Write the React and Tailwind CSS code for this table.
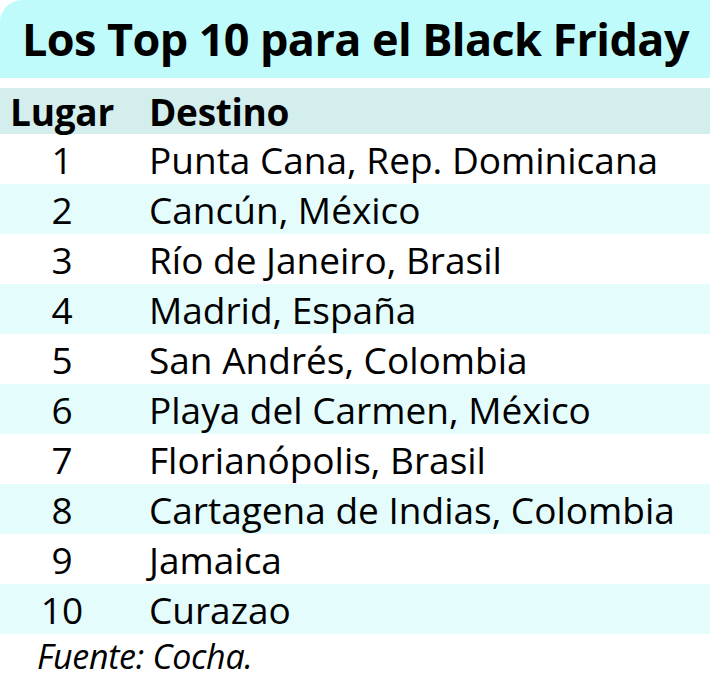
import React from "react";

const rows = [
  "Punta Cana, Rep. Dominicana",
  "Cancún, México",
  "Río de Janeiro, Brasil",
  "Madrid, España",
  "San Andrés, Colombia",
  "Playa del Carmen, México",
  "Florianópolis, Brasil",
  "Cartagena de Indias, Colombia",
  "Jamaica",
  "Curazao",
];

export default function App() {
  return (
    <div className="w-[710px] h-[679px] bg-white text-black font-['Open_Sans',sans-serif] overflow-hidden">
      {/* title */}
      <div className="h-[78px] bg-[#bffbfb] rounded-tl-[22px] flex items-center pl-[22px]">
        <h1 className="text-[45px] font-bold tracking-[-0.6px] leading-none -mt-[2px]">
          Los Top 10 para el Black Friday
        </h1>
      </div>
      <div className="h-[10px]" />
      {/* table */}
      <table className="w-full border-collapse">
        <thead>
          <tr className="h-[46px] bg-[#d4eeee]">
            <th className="w-[124px] text-center text-[37px] font-bold leading-none tracking-[-0.3px]">Lugar</th>
            <th className="pl-[25px] text-left text-[37px] font-bold leading-none tracking-[-0.3px]">Destino</th>
          </tr>
        </thead>
        <tbody>
          {rows.map((place, idx) => (
            <tr key={idx} className={idx % 2 === 1 ? "h-[50px] bg-[#e4fcfc]" : "h-[50px] bg-white"}>
              <td className="w-[124px] text-center text-[37px] leading-none">{idx + 1}</td>
              <td className="pl-[25px] text-left text-[37px] leading-none whitespace-nowrap">{place}</td>
            </tr>
          ))}
        </tbody>
      </table>
      <p className="pl-[37px] pt-[5px] text-[34px] italic leading-none tracking-[-0.3px]">Fuente: Cocha.</p>
    </div>
  );
}
